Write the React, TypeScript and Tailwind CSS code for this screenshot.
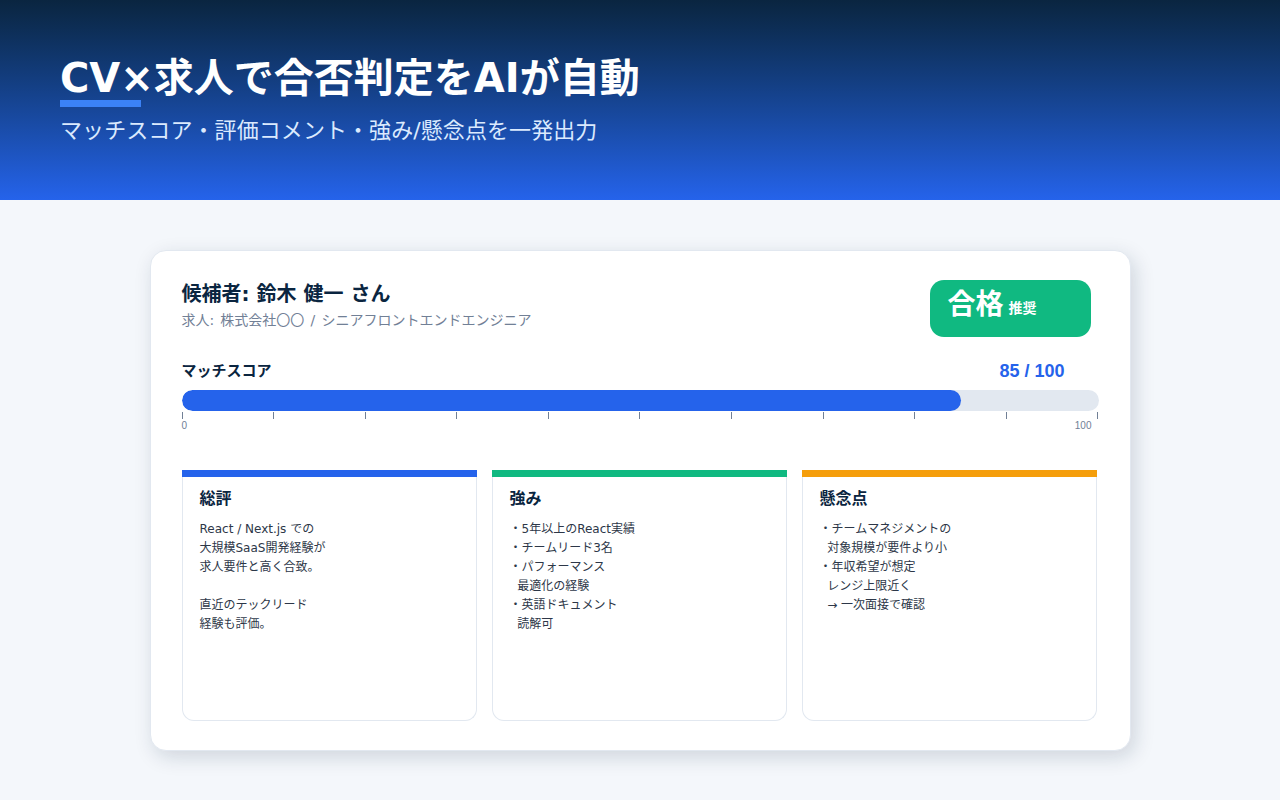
const panels = [
  {
    title: "総評",
    bar: "bg-[#2563eb]",
    lines: ["React / Next.js での", "大規模SaaS開発経験が", "求人要件と高く合致。", "\u00a0", "直近のテックリード", "経験も評価。"],
  },
  {
    title: "強み",
    bar: "bg-[#10b981]",
    lines: ["・5年以上のReact実績", "・チームリード3名", "・パフォーマンス", "\u00a0\u00a0最適化の経験", "・英語ドキュメント", "\u00a0\u00a0読解可"],
  },
  {
    title: "懸念点",
    bar: "bg-[#f59e0b]",
    lines: ["・チームマネジメントの", "\u00a0\u00a0対象規模が要件より小", "・年収希望が想定", "\u00a0\u00a0レンジ上限近く", "\u00a0\u00a0→ 一次面接で確認"],
  },
];

const ticks = Array.from({ length: 11 }, (_, i) => i);

export default function App() {
  return (
    <div className="w-[1280px] h-[800px] overflow-hidden bg-[#f4f7fb] font-['DejaVu_Sans','Noto_Sans_CJK_JP',sans-serif]">
      <header className="h-[200px] px-[60px] pt-[50px] bg-gradient-to-b from-[#0a2540] to-[#2563eb]">
        <h1 className="relative text-[40px] leading-[56px] font-bold text-white">
          CV×求人で合否判定をAIが自動
          <span className="absolute left-0 top-[50px] w-[81px] h-[7px] bg-[#3b82f6]" />
        </h1>
        <p className="mt-[9px] text-[22px] leading-[32px] tracking-[0.08px] text-[#dbeafe]">
          マッチスコア・評価コメント・強み/懸念点を一発出力
        </p>
      </header>

      <main className="flex justify-center pt-[50px]">
        <section className="w-[981px] h-[501px] px-[31px] pt-[29px] bg-white border border-[#e2e8f0] rounded-[16px] shadow-[4px_6px_20px_rgba(10,37,64,0.16)]">
          <div className="flex items-start justify-between">
            <div>
              <h2 className="text-[20px] leading-[28px] font-bold text-[#0a2540]">候補者: 鈴木 健一 さん</h2>
              <p className="mt-[2px] text-[14px] leading-[20px] [word-spacing:1.7px] text-[#718096]">求人: 株式会社〇〇 / シニアフロントエンドエンジニア</p>
            </div>
            <div className="w-[161px] h-[57px] mr-[8px] pl-[18px] pb-[7px] flex items-center gap-[5px] bg-[#10b981] rounded-[14px] text-white font-bold font-['Liberation_Sans','Noto_Sans_CJK_JP',sans-serif]">
              <span className="text-[28px] leading-[40px]">合格</span>
              <span className="text-[14px] leading-[20px] mt-[6px]">推奨</span>
            </div>
          </div>

          <div className="mt-[22px] flex justify-between">
            <span className="text-[15px] leading-[24px] font-bold text-[#0a2540]">マッチスコア</span>
            <span className="w-[99px] text-[18px] leading-[24px] font-bold text-[#2563eb] font-['Liberation_Sans',sans-serif]">85 / 100</span>
          </div>

          <div className="mt-[7px] w-[917px] h-[21px] bg-[#e2e8f0] rounded-full overflow-hidden">
            <div className="h-full w-[85%] bg-[#2563eb] rounded-full" />
          </div>
          <div className="mt-[1px] w-[917px] flex justify-between">
            {ticks.map((t) => (
              <span key={t} className="w-px h-[7px] bg-[#718096]" />
            ))}
          </div>
          <div className="w-[910px] flex justify-between text-[10px] leading-[14px] text-[#718096] font-['Liberation_Sans',sans-serif]">
            <span>0</span>
            <span>100</span>
          </div>

          <div className="mt-[37px] flex gap-[15px]">
            {panels.map((p) => (
              <div key={p.title} className="w-[295px] h-[251px] bg-white border-x border-b border-[#e2e8f0] rounded-b-[12px]">
                <div className={`-mx-px h-[7px] ${p.bar}`} />
                <div className="px-[17px] pt-[12px]">
                  <h3 className="text-[16px] leading-[20px] font-bold text-[#0a2540]">{p.title}</h3>
                  <div className="mt-[11px] text-[12px] leading-[19px] text-[#2d3748]">
                    {p.lines.map((l, i) => (
                      <div key={i}>{l}</div>
                    ))}
                  </div>
                </div>
              </div>
            ))}
          </div>
        </section>
      </main>
    </div>
  );
}
